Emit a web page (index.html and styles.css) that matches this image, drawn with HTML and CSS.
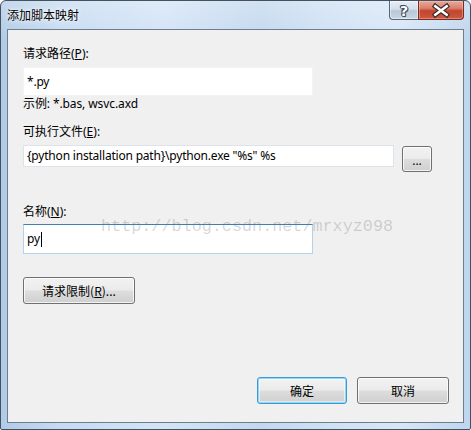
FILE: index.html
```html
<!DOCTYPE html>
<html lang="zh-CN">
<head>
<meta charset="utf-8">
<title>添加脚本映射</title>
<link rel="stylesheet" href="styles.css">
</head>
<body>
<div class="window">
  <div class="titlebar">
    <span class="title">添加脚本映射</span>
    <div class="caption-buttons">
      <div class="cap-btn help"><span class="qmark">?</span></div>
      <div class="cap-btn close">
        <svg width="46" height="19" viewBox="0 0 46 19">
          <path d="M17 5 L29 14 M29 5 L17 14" stroke="#3a2a28" stroke-width="5" stroke-linecap="square" fill="none"/>
          <path d="M17 5 L29 14 M29 5 L17 14" stroke="#ffffff" stroke-width="2.6" stroke-linecap="square" fill="none"/>
        </svg>
      </div>
    </div>
  </div>
  <div class="client">
    <div class="label">请求路径(<u>P</u>):</div>
    <div class="textbox tb-path">*.py</div>
    <div class="hint">示例: *.bas, wsvc.axd</div>
    <div class="label label-exe">可执行文件(<u>E</u>):</div>
    <div class="exe-row">
      <div class="textbox tb-exe">{python installation path}\python.exe "%s" %s</div>
      <div class="btn btn-browse">...</div>
    </div>
    <div class="label label-name">名称(<u>N</u>):</div>
    <div class="textbox tb-name">py<span class="caret"></span></div>
    <div class="btn btn-limit">请求限制(<u>R</u>)...</div>
    <div class="footer">
      <div class="btn btn-ok">确定</div>
      <div class="btn btn-cancel">取消</div>
    </div>
  </div>
  <div class="watermark">http://blog.csdn.net/mrxyz098</div>
</div>
</body>
</html>
```
FILE: styles.css
```css
html, body {
  margin: 0;
  padding: 0;
  background: #ffffff;
}

.window {
  position: relative;
  width: 471px;
  height: 430px;
  box-sizing: border-box;
  border: 1px solid #44525f;
  border-radius: 6px 6px 2px 2px;
  background:
    linear-gradient(180deg, rgba(255,255,255,0.25) 0px, rgba(255,255,255,0) 40px),
    linear-gradient(90deg, #b1cbe7 0%, #c6dbf1 12%, #d3e4f6 35%, #c3d8ee 55%, #cfe1f4 70%, #d8e7f7 85%, #bfd5ed 100%);
  display: flex;
  flex-direction: column;
  font-family: "Noto Sans", "Noto Sans CJK SC", sans-serif;
  font-size: 12px;
  color: #000;
  overflow: hidden;
}

.titlebar {
  height: 28px;
  display: flex;
  align-items: flex-start;
  padding-left: 6px;
}

.title {
  margin-top: 6px;
  line-height: 16px;
  font-family: "Noto Sans CJK SC", sans-serif;
  font-size: 12px;
  text-shadow: 0 0 6px rgba(255,255,255,0.95), 0 0 3px rgba(255,255,255,0.9);
}

.caption-buttons {
  margin-left: auto;
  margin-right: 6px;
  display: flex;
}

.cap-btn {
  height: 19px;
  box-sizing: border-box;
  display: flex;
  align-items: center;
  justify-content: center;
  border: 1px solid #56677a;
  border-top: none;
}

.help {
  width: 29px;
  border-right: none;
  border-radius: 0 0 0 4px;
  background: linear-gradient(180deg, #e6eef7 0%, #d3dfeb 45%, #b9c8d8 55%, #c9d6e3 100%);
  box-shadow: inset 0 0 0 1px rgba(255,255,255,0.45);
}

.qmark {
  font-family: "DejaVu Sans", sans-serif;
  font-weight: bold;
  font-size: 14px;
  line-height: 14px;
  color: #ffffff;
  text-shadow: 1px 0 0 #3e4b5a, -1px 0 0 #3e4b5a, 0 1px 0 #3e4b5a, 0 -1px 0 #3e4b5a, 1px 1px 0 #3e4b5a, -1px -1px 0 #3e4b5a;
  margin-top: 1px;
}

.close {
  width: 46px;
  border-color: #7a2b22;
  border-radius: 0 0 4px 0;
  background: linear-gradient(180deg, #e9a99b 0%, #d9806c 40%, #c2442d 55%, #cc5a41 100%);
  box-shadow: inset 0 0 0 1px rgba(255,210,200,0.4);
}

.close svg {
  display: block;
}

.client {
  flex: 1;
  margin: 0 6px 6px 6px;
  border: 1px solid #6e7e8f;
  background: #f0f0f0;
  padding: 16px 14px 0 15px;
  display: flex;
  flex-direction: column;
  align-items: flex-start;
}

.label, .hint {
  line-height: 16px;
  height: 16px;
  white-space: nowrap;
}

.hint {
  letter-spacing: -0.1px;
}

.textbox {
  box-sizing: border-box;
  background: #ffffff;
  line-height: 16px;
  padding: 0 3px;
  display: flex;
  align-items: center;
  white-space: nowrap;
  letter-spacing: -0.2px;
}

.tb-path {
  margin-top: 5px;
  width: 290px;
  height: 29px;
  border: 1px solid #f3f3f3;
}

.label-exe {
  margin-top: 12px;
}

.exe-row {
  margin-top: 5px;
  display: flex;
  align-items: flex-start;
  gap: 8px;
}

.tb-exe {
  width: 371px;
  height: 22px;
  border: 1px solid #dde3ea;
}

.label-name {
  margin-top: 32px;
}

.tb-name {
  margin-top: 4px;
  width: 290px;
  height: 30px;
  border: 1px solid #b3d3ea;
  border-top-color: #3d7fb2;
}

.caret {
  display: inline-block;
  width: 1px;
  height: 15px;
  background: #000;
  margin-left: 1px;
}

.btn {
  box-sizing: border-box;
  border: 1px solid #707070;
  border-radius: 3px;
  background: linear-gradient(180deg, #f2f2f2 0%, #ebebeb 48%, #dddddd 52%, #cfcfcf 100%);
  box-shadow: inset 0 0 0 1px rgba(255,255,255,0.75);
  display: flex;
  align-items: center;
  justify-content: center;
  font-family: "Noto Sans CJK SC", sans-serif;
  line-height: 16px;
  white-space: nowrap;
}

.btn-browse {
  margin-top: 1px;
  width: 30px;
  height: 26px;
  font-family: "Noto Sans", sans-serif;
  padding-top: 3px;
}

.btn-limit {
  margin-top: 23px;
  width: 112px;
  height: 27px;
}

.footer {
  margin-top: 73px;
  align-self: stretch;
  display: flex;
  justify-content: flex-end;
  gap: 10px;
}

.btn-ok {
  width: 90px;
  height: 27px;
  border-color: #3c9ad8;
  box-shadow: inset 0 0 0 1px #8fd8f6, inset 0 0 0 2px rgba(255,255,255,0.5);
}

.btn-cancel {
  width: 92px;
  height: 27px;
}

.watermark {
  position: absolute;
  left: 100px;
  top: 216px;
  font-family: "Liberation Mono", monospace;
  font-size: 16.8px;
  line-height: 20px;
  color: rgba(110, 110, 110, 0.28);
  white-space: nowrap;
  pointer-events: none;
}
```
